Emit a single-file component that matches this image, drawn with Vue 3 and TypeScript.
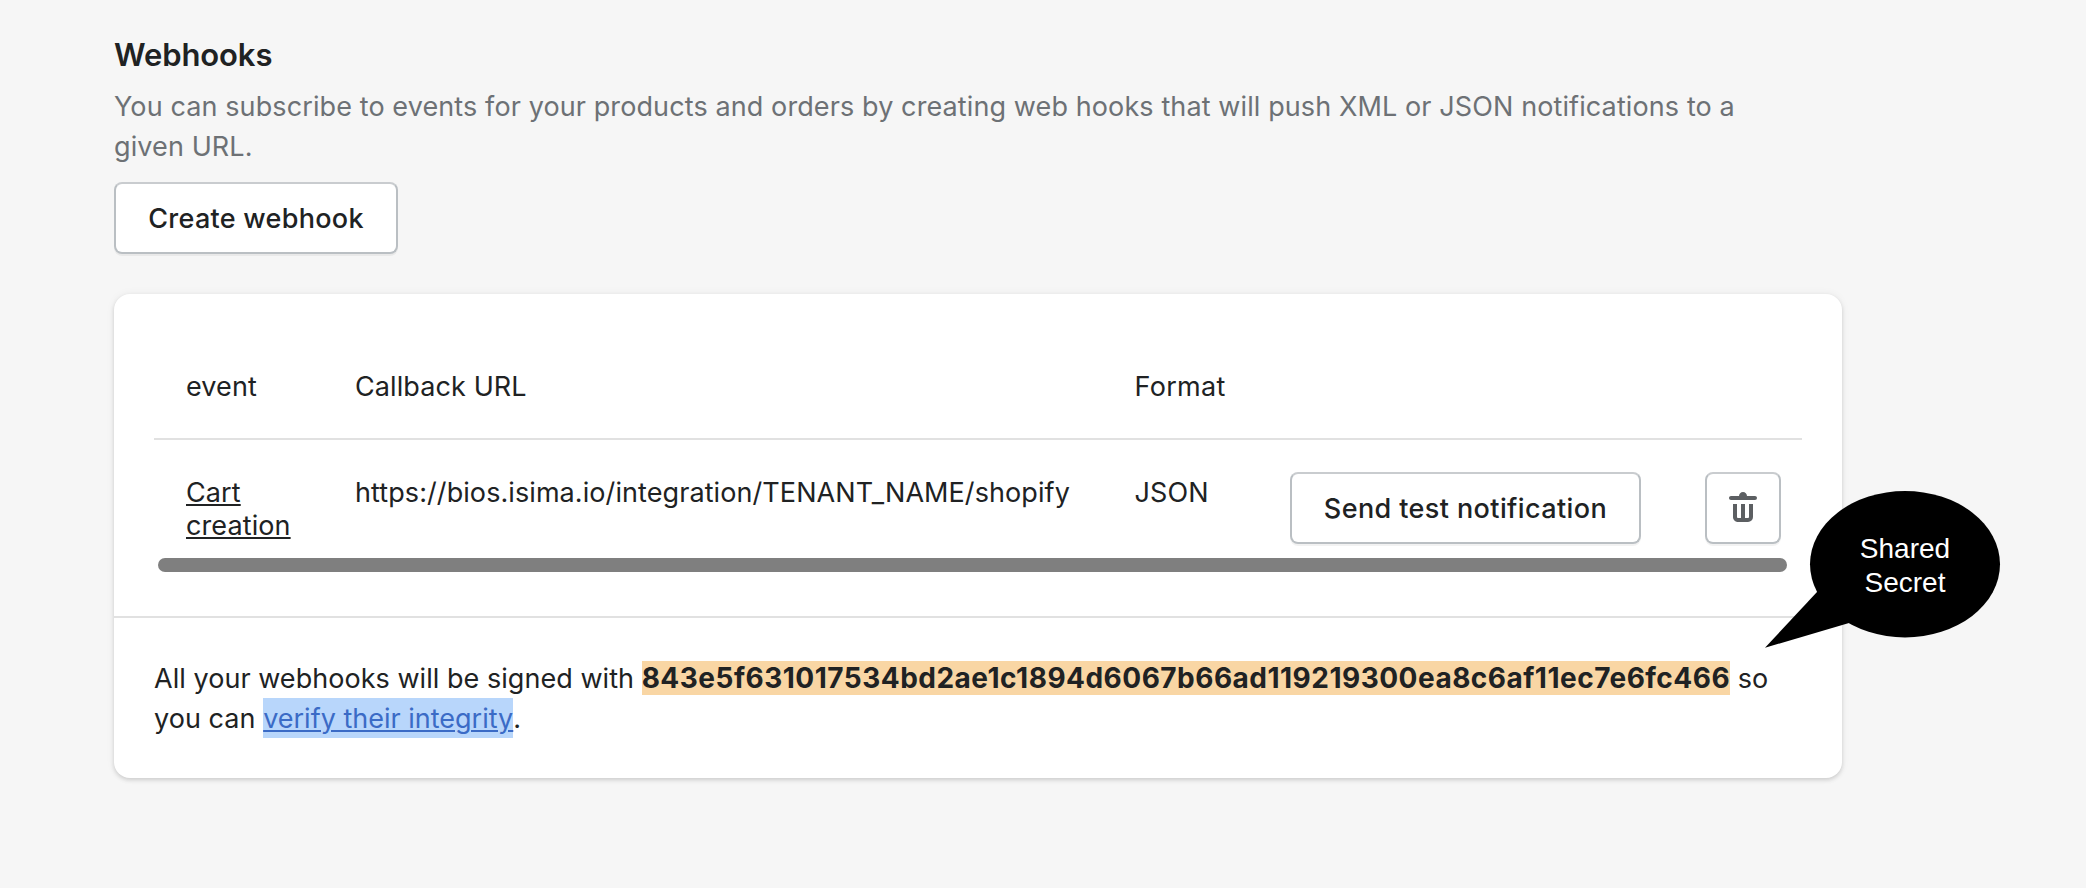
<script setup lang="ts">
interface Webhook {
  id: number
  event: string
  url: string
  format: string
}

const webhooks: Webhook[] = [
  {
    id: 1,
    event: 'Cart creation',
    url: 'https://bios.isima.io/integration/TENANT_NAME/shopify',
    format: 'JSON',
  },
]

const secret = '843e5f631017534bd2ae1c1894d6067b66ad119219300ea8c6af11ec7e6fc466'
</script>

<template>
  <main class="page">
    <header class="intro">
      <h2 class="title">Webhooks</h2>
      <p class="description">
        You can subscribe to events for your products and orders by creating web hooks that will push XML or JSON notifications to a<br />given URL.
      </p>
      <button type="button" class="button create">Create webhook</button>
    </header>

    <section class="card">
      <div class="table-area">
        <div class="row head">
          <span>event</span>
          <span>Callback URL</span>
          <span class="format">Format</span>
        </div>
        <div v-for="hook in webhooks" :key="hook.id" class="row body">
          <div class="cell event"><a class="event-link">{{ hook.event }}</a></div>
          <div class="cell url">{{ hook.url }}</div>
          <div class="cell">{{ hook.format }}</div>
          <button type="button" class="button send">Send test notification</button>
          <button type="button" class="button trash" aria-label="Delete webhook">
            <svg width="40" height="40" viewBox="0 0 20 20" fill="#5c5f62">
              <path
                d="M8 3.994c0-1.101.895-1.994 2-1.994s2 .893 2 1.994h4c.552 0 1 .446 1 .997a1 1 0 0 1-1 .997h-12c-.552 0-1-.447-1-.997s.448-.997 1-.997h4zm-3 10.514v-6.508h2v6.508a.5.5 0 0 0 .5.498h1.5v-7.006h2v7.006h1.5a.5.5 0 0 0 .5-.498v-6.508h2v6.508a2.496 2.496 0 0 1-2.5 2.492h-5c-1.38 0-2.5-1.116-2.5-2.492z"
              />
            </svg>
          </button>
        </div>
        <div class="scrollbar"></div>
      </div>
      <div class="signature">
        All your webhooks will be signed with <strong class="secret">{{ secret }}</strong> so<br />you can
        <a class="verify">verify their integrity</a>.
      </div>

      <div class="callout">
        <svg class="callout-shape" width="240" height="160" viewBox="0 0 240 160">
          <ellipse cx="142" cy="75.2" rx="95" ry="73.2" />
          <path d="M2 158.8 L54 103 L100 80 L86 134 Z" />
        </svg>
        <div class="callout-text">Shared<br />Secret</div>
      </div>
    </section>
  </main>
</template>

<style>
body {
  background: #f6f6f6;
}
</style>

<style scoped>
.page {
  box-sizing: border-box;
  width: 2086px;
  height: 888px;
  padding: 35px 244px 0 114px;
  background: #f6f6f6;
  color: #202223;
  font-family: Inter, "Liberation Sans", sans-serif;
  font-size: 27px;
  line-height: 40px;
  letter-spacing: 0.1px;
}

.title {
  margin: 0 0 12px;
  font-size: 31px;
  font-weight: 600;
  line-height: 40px;
  letter-spacing: -0.1px;
}

.description {
  margin: 0 0 15px;
  color: #6d7175;
  letter-spacing: 0.105px;
  white-space: nowrap;
}

.button {
  display: flex;
  align-items: center;
  justify-content: center;
  box-sizing: border-box;
  height: 72px;
  padding: 0;
  border: 2px solid #babfc3;
  border-top-color: #c9cccf;
  border-radius: 8px;
  background: #fff;
  box-shadow: 0 2px 0 rgba(0, 0, 0, 0.05);
  color: #202223;
  font: inherit;
  font-weight: 500;
  white-space: nowrap;
}

.create {
  width: 284px;
  padding: 2px 0 0;
  letter-spacing: 0.28px;
}

.send {
  width: 351px;
  letter-spacing: 0.4px;
}

.trash {
  width: 76px;
}

.card {
  position: relative;
  margin-top: 40px;
  border-radius: 16px;
  background: #fff;
  box-shadow: 0 0 10px rgba(23, 24, 24, 0.05), 0 2px 4px rgba(0, 0, 0, 0.15);
  width: 1728px;
}

.table-area {
  padding: 40px 40px 44px;
}

.row {
  display: grid;
  grid-template-columns: 169px 779.5px 155.5px 415px 76px;
  padding-left: 32px;
  line-height: 33px;
}

.head {
  padding-top: 36px;
  padding-bottom: 35px;
  border-bottom: 2px solid #e1e1e1;
}

.format {
  letter-spacing: 0.3px;
}

.body {
  padding-top: 32px;
}

.cell {
  padding-top: 4px;
}

.event {
  width: 110px;
}

.url {
  letter-spacing: 0.08px;
}

.event-link {
  text-decoration: underline;
  text-decoration-thickness: 2px;
  text-underline-offset: 2px;
}

.scrollbar {
  height: 14px;
  margin: 14px 15px 0 4px;
  border-radius: 7px;
  background: #7f7f7f;
}

.signature {
  padding: 41px 40px 39px;
  border-top: 2px solid #e1e1e1;
  letter-spacing: 0.04px;
  white-space: nowrap;
}

.secret {
  background: #f9d6a4;
  font-size: 28px;
  font-weight: 700;
  line-height: 36px;
  letter-spacing: 0.49px;
}

.verify {
  padding: 4px 0 3px;
  background: #b8d6fb;
  color: #3b6bc6;
  letter-spacing: 0;
  text-decoration: underline;
  text-decoration-thickness: 2px;
  text-underline-offset: 2px;
}

/* Annotation bubble floating over the card's right edge */
.callout {
  position: absolute;
  top: 195px;
  left: 1649px;
  width: 240px;
  height: 160px;
}

.callout-shape {
  display: block;
}

.callout-text {
  position: absolute;
  top: 43px;
  left: 47px;
  width: 190px;
  color: #fff;
  font-family: "Liberation Sans", Arial, sans-serif;
  font-size: 28px;
  line-height: 34px;
  letter-spacing: 0;
  text-align: center;
}
</style>
